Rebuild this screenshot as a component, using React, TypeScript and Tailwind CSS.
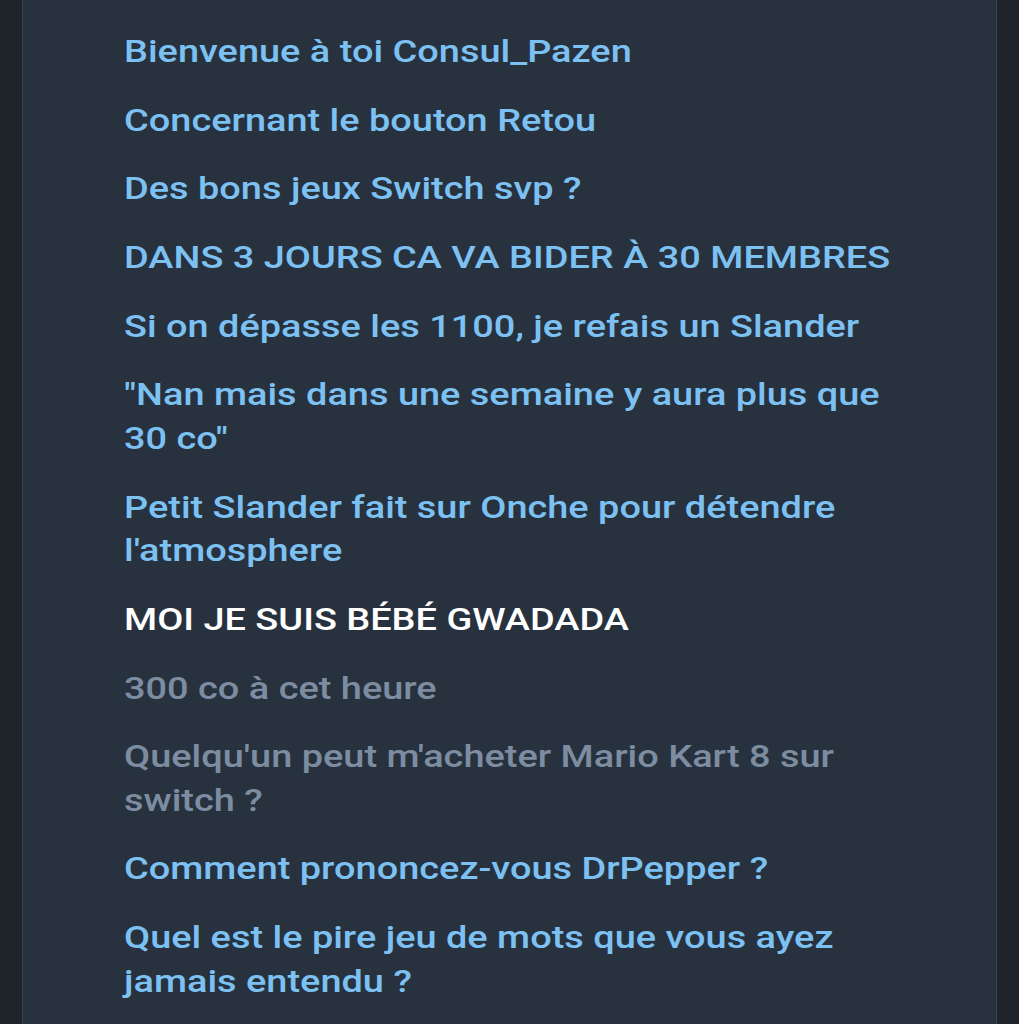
import React from "react";

type Item = { text: string; tone: "blue" | "white" | "gray" };

const items: Item[] = [
  { text: "Bienvenue à toi Consul_Pazen", tone: "blue" },
  { text: "Concernant le bouton Retou", tone: "blue" },
  { text: "Des bons jeux Switch svp ?", tone: "blue" },
  { text: "DANS 3 JOURS CA VA BIDER À 30 MEMBRES", tone: "blue" },
  { text: "Si on dépasse les 1100, je refais un Slander", tone: "blue" },
  { text: "\"Nan mais dans une semaine y aura plus que 30 co\"", tone: "blue" },
  { text: "Petit Slander fait sur Onche pour détendre l'atmosphere", tone: "blue" },
  { text: "MOI JE SUIS BÉBÉ GWADADA", tone: "white" },
  { text: "300 co à cet heure", tone: "gray" },
  { text: "Quelqu'un peut m'acheter Mario Kart 8 sur switch ?", tone: "gray" },
  { text: "Comment prononcez-vous DrPepper ?", tone: "blue" },
  { text: "Quel est le pire jeu de mots que vous ayez jamais entendu ?", tone: "blue" },
];

export default function App() {
  return (
    <div
      className="flex h-[1024px] w-[1019px] overflow-hidden bg-[#1f242b]"
      style={{ fontFamily: "Roboto, 'Noto Sans', sans-serif" }}
    >
      <div className="w-[22px] shrink-0 bg-[#1f242b]" />
      <div className="w-[975px] shrink-0 border-x border-x-[#3a4452] bg-[#28323f] pl-[101px] pt-[30px]">
        <ul className="flex w-[675px] origin-left scale-x-[1.185] flex-col gap-[25.2px]">
          {items.map((it, i) => (
            <li
              key={i}
              className={
                "text-[32px] font-medium leading-[43.5px] " +
                (it.tone === "blue"
                  ? "text-[#7cc1f2]"
                  : it.tone === "white"
                  ? "text-white"
                  : "text-[#7d8da1]")
              }
            >
              {it.text}
            </li>
          ))}
        </ul>
      </div>
      <div className="flex-1 bg-[#1f242b]" />
    </div>
  );
}
